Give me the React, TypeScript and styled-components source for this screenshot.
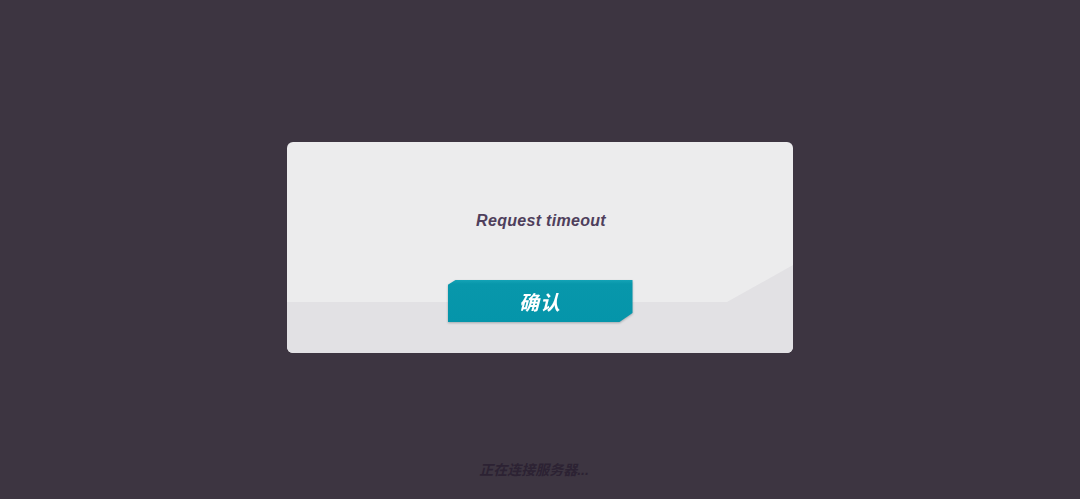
import styled, { createGlobalStyle } from 'styled-components';

const GlobalStyle = createGlobalStyle`
    html, body {
        margin: 0;
        padding: 0;
        background: #3d3541;
    }
    body {
        font-family: "Liberation Sans", "Noto Sans CJK SC", sans-serif;
    }
`;

const Screen = styled.div`
    height: 499px;
    display: flex;
    flex-direction: column;
    align-items: center;
    padding-top: 142px;
    box-sizing: border-box;
    background: #3d3541;
`;

const Dialog = styled.div`
    position: relative;
    width: 506px;
    height: 211px;
    border-radius: 6px;
    background: #ececed;
    overflow: hidden;
    display: flex;
    flex-direction: column;
    align-items: center;
    padding-top: 69px;
    box-sizing: border-box;

    /* lower shaded band with the slanted corner on the right */
    &::before {
        content: '';
        position: absolute;
        inset: 0;
        background: #e2e1e4;
        clip-path: polygon(0 160px, 440px 160px, 506px 123px, 506px 211px, 0 211px);
    }
`;

const Message = styled.div`
    position: relative;
    margin-left: 2px;
    font-size: 16px;
    line-height: 20px;
    font-weight: 700;
    font-style: italic;
    color: #4f3f5c;
    letter-spacing: 0.3px;
`;

const ButtonShadow = styled.div`
    position: relative;
    margin-top: 49px;
    filter: drop-shadow(0 1px 1px rgba(40, 60, 70, 0.35));
`;

const ConfirmButton = styled.button`
    display: block;
    width: 185px;
    height: 42px;
    border: none;
    padding: 0;
    background: linear-gradient(180deg, #14a3b6 0px, #0897ab 4px, #0595aa 100%);
    clip-path: polygon(8px 0, 100% 0, 100% 33px, 172px 100%, 0 100%, 0 5px);
    color: #ffffff;
    font-family: "Liberation Sans", "Noto Sans CJK SC", sans-serif;
    font-size: 20px;
    font-weight: 700;
    font-style: italic;
    letter-spacing: 1px;
    cursor: pointer;
`;

const Status = styled.div`
    margin-top: 109px;
    margin-right: 12px;
    font-size: 14px;
    line-height: 16px;
    font-weight: 700;
    font-style: italic;
    color: #2c2233;
`;

export default function App() {
    return (
        <>
            <GlobalStyle />
            <Screen>
                <Dialog>
                    <Message>Request timeout</Message>
                    <ButtonShadow>
                        <ConfirmButton>确认</ConfirmButton>
                    </ButtonShadow>
                </Dialog>
                <Status>正在连接服务器...</Status>
            </Screen>
        </>
    );
}
